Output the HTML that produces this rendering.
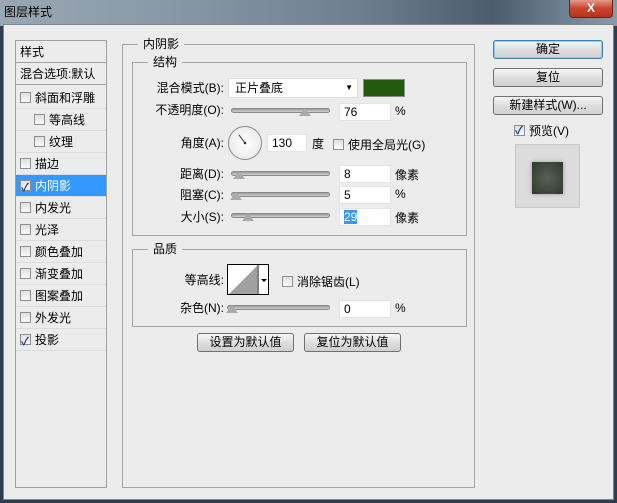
<!DOCTYPE html>
<html><head><meta charset="utf-8"><style>
*{margin:0;padding:0;box-sizing:border-box}
body{width:617px;height:503px;overflow:hidden;background:#2c3e50;font-family:"Liberation Sans","Noto Sans CJK SC",sans-serif;font-size:12px;color:#000;position:relative}
.a{position:absolute}
.title{left:0;top:0;width:617px;height:26px;background:linear-gradient(90deg,#9aa8b4 0%,#8796a4 30%,#6c7d8d 60%,#4b5d6e 80%,#8a9aa8 100%)}
.close{left:569px;top:0;width:44px;height:18px;background:linear-gradient(#e49a8a,#c6432c 50%,#b83420);border:1px solid #5a2a20;border-top:none;border-radius:0 0 4px 4px;color:#fff;font-weight:bold;text-align:center;font-size:12px;line-height:16px}
.body{left:3px;top:24px;width:611px;height:476px;background:#ececec;border:1px solid #7a8790}
.list{left:15px;top:40px;width:92px;height:448px;border:1px solid #a0a0a0;background:#ececec}
.it{position:absolute;left:0;width:90px;height:22px;line-height:22px;padding-left:4px;border-bottom:1px solid #dcdcdc}
.cb{display:inline-block;width:11px;height:11px;border:1px solid #8e8e8e;background:linear-gradient(#e0e0e0,#fafafa);vertical-align:-1px;margin-right:4px;position:relative}
.cb.on::after{content:"✓";position:absolute;left:0;top:-4px;font-size:11px;color:#1a3a8a;font-weight:bold}
.grp{border:1px solid #a5a5a5}
.lg{position:absolute;background:#ececec;padding:0 5px;line-height:14px}
.lbl{position:absolute;text-align:right;width:100px;line-height:16px}
.sl{position:absolute;height:5px;background:linear-gradient(#9a9a9a,#d0d0d0);border:1px solid #8a8a8a;border-radius:3px}
.th{position:absolute;width:0;height:0;border-left:6px solid transparent;border-right:6px solid transparent;border-bottom:8px solid #aaa}
.in{position:absolute;height:18px;background:#fff;border:1px solid #e4e4e4;padding-left:4px;line-height:17px}
.btn{position:absolute;height:19px;border:1px solid #707070;border-radius:3px;background:linear-gradient(#f6f6f6,#dedede 50%,#d0d0d0);text-align:center;line-height:17px}
</style></head><body>
<div class="a title"></div>
<div class="a" style="left:4px;top:3px;font-size:12px;color:#000">图层样式</div>
<div class="a close">X</div>
<div class="a body"></div>
<div class="a list">
<div class="it" style="top:0;border-bottom:1px solid #a0a0a0">样式</div>
<div class="it" style="top:22px;border-bottom:1px solid #a0a0a0">混合选项:默认</div>
<div class="it" style="top:46px"><span class="cb"></span>斜面和浮雕</div>
<div class="it" style="top:68px;padding-left:18px"><span class="cb"></span>等高线</div>
<div class="it" style="top:90px;padding-left:18px"><span class="cb"></span>纹理</div>
<div class="it" style="top:112px"><span class="cb"></span>描边</div>
<div class="it" style="top:134px;background:#3399ff;color:#fff"><span class="cb on"></span>内阴影</div>
<div class="it" style="top:156px"><span class="cb"></span>内发光</div>
<div class="it" style="top:178px"><span class="cb"></span>光泽</div>
<div class="it" style="top:200px"><span class="cb"></span>颜色叠加</div>
<div class="it" style="top:222px"><span class="cb"></span>渐变叠加</div>
<div class="it" style="top:244px"><span class="cb"></span>图案叠加</div>
<div class="it" style="top:266px"><span class="cb"></span>外发光</div>
<div class="it" style="top:288px"><span class="cb on"></span>投影</div>
</div>

<div class="a grp" style="left:122px;top:44px;width:353px;height:444px"></div>
<div class="lg" style="left:138px;top:37px">内阴影</div>
<div class="a grp" style="left:132px;top:62px;width:335px;height:174px"></div>
<div class="lg" style="left:148px;top:55px">结构</div>

<div class="lbl" style="left:124px;top:80px">混合模式(B):</div>
<div class="a" style="left:228px;top:78px;width:130px;height:20px;background:#fff;border:1px solid #ddd;line-height:18px;padding-left:6px">正片叠底<span style="position:absolute;right:4px;font-size:8px">▼</span></div>
<div class="a" style="left:363px;top:79px;width:42px;height:18px;background:#245a0c;border:1px solid #8a8a8a"></div>

<div class="lbl" style="left:124px;top:102px">不透明度(O):</div>
<div class="sl" style="left:231px;top:108px;width:99px"></div><div class="th" style="left:299px;top:108px"></div>
<div class="in" style="left:339px;top:103px;width:52px">76</div><div class="a" style="left:395px;top:104px">%</div>

<div class="lbl" style="left:124px;top:135px">角度(A):</div>
<div class="a" style="left:228px;top:126px;width:34px;height:34px;border-radius:50%;border:1px solid #888;background:radial-gradient(#fff,#e4e4e4)"></div>
<svg class="a" style="left:228px;top:126px" width="34" height="34"><line x1="11" y1="9" x2="17" y2="17" stroke="#333" stroke-width="1"/><circle cx="17" cy="17" r="1.3" fill="#333"/></svg>
<div class="in" style="left:267px;top:134px;width:40px">130</div><div class="a" style="left:312px;top:135px">度</div>
<div class="a" style="left:333px;top:136px"><span class="cb"></span>使用全局光(G)</div>

<div class="lbl" style="left:124px;top:166px">距离(D):</div>
<div class="sl" style="left:231px;top:171px;width:99px"></div><div class="th" style="left:233px;top:171px"></div>
<div class="in" style="left:339px;top:165px;width:52px">8</div><div class="a" style="left:395px;top:166px">像素</div>

<div class="lbl" style="left:124px;top:187px">阻塞(C):</div>
<div class="sl" style="left:231px;top:192px;width:99px"></div><div class="th" style="left:230px;top:192px"></div>
<div class="in" style="left:339px;top:186px;width:52px">5</div><div class="a" style="left:395px;top:187px">%</div>

<div class="lbl" style="left:124px;top:209px">大小(S):</div>
<div class="sl" style="left:231px;top:213px;width:99px"></div><div class="th" style="left:242px;top:213px"></div>
<div class="in" style="left:339px;top:208px;width:52px"><span style="background:#3399ff;color:#fff">29</span></div><div class="a" style="left:395px;top:209px">像素</div>

<div class="a grp" style="left:132px;top:249px;width:335px;height:78px"></div>
<div class="lg" style="left:148px;top:242px">品质</div>
<div class="lbl" style="left:124px;top:272px">等高线:</div>
<div class="a" style="left:227px;top:264px;width:42px;height:31px;border:1px solid #000;background:#fff">
<svg width="40" height="29" style="position:absolute;left:0;top:0"><polygon points="1,29 29,1 29,29" fill="#a0a0a0"/><line x1="30" y1="0" x2="30" y2="29" stroke="#000"/><polygon points="33,14 39,14 36,17" fill="#000"/></svg></div>
<div class="a" style="left:282px;top:273px"><span class="cb"></span>消除锯齿(L)</div>
<div class="lbl" style="left:124px;top:300px">杂色(N):</div>
<div class="sl" style="left:227px;top:305px;width:103px"></div><div class="th" style="left:226px;top:305px"></div>
<div class="in" style="left:339px;top:300px;width:52px">0</div><div class="a" style="left:395px;top:301px">%</div>

<div class="btn" style="left:197px;top:333px;width:97px">设置为默认值</div>
<div class="btn" style="left:304px;top:333px;width:97px">复位为默认值</div>

<div class="btn" style="left:493px;top:40px;width:110px;border-color:#3c7fb1;box-shadow:0 0 0 1px #8fd0f0 inset">确定</div>
<div class="btn" style="left:493px;top:68px;width:110px">复位</div>
<div class="btn" style="left:493px;top:96px;width:110px">新建样式(W)...</div>
<div class="a" style="left:514px;top:122px"><span class="cb on"></span>预览(V)</div>
<div class="a" style="left:515px;top:144px;width:65px;height:64px;background:#dcdcdc;border:1px solid #c8c8c8"></div>
<div class="a" style="left:532px;top:162px;width:31px;height:32px;background:radial-gradient(#5a5f58,#2e3a2c);box-shadow:0 0 4px #999"></div>
</body></html>
